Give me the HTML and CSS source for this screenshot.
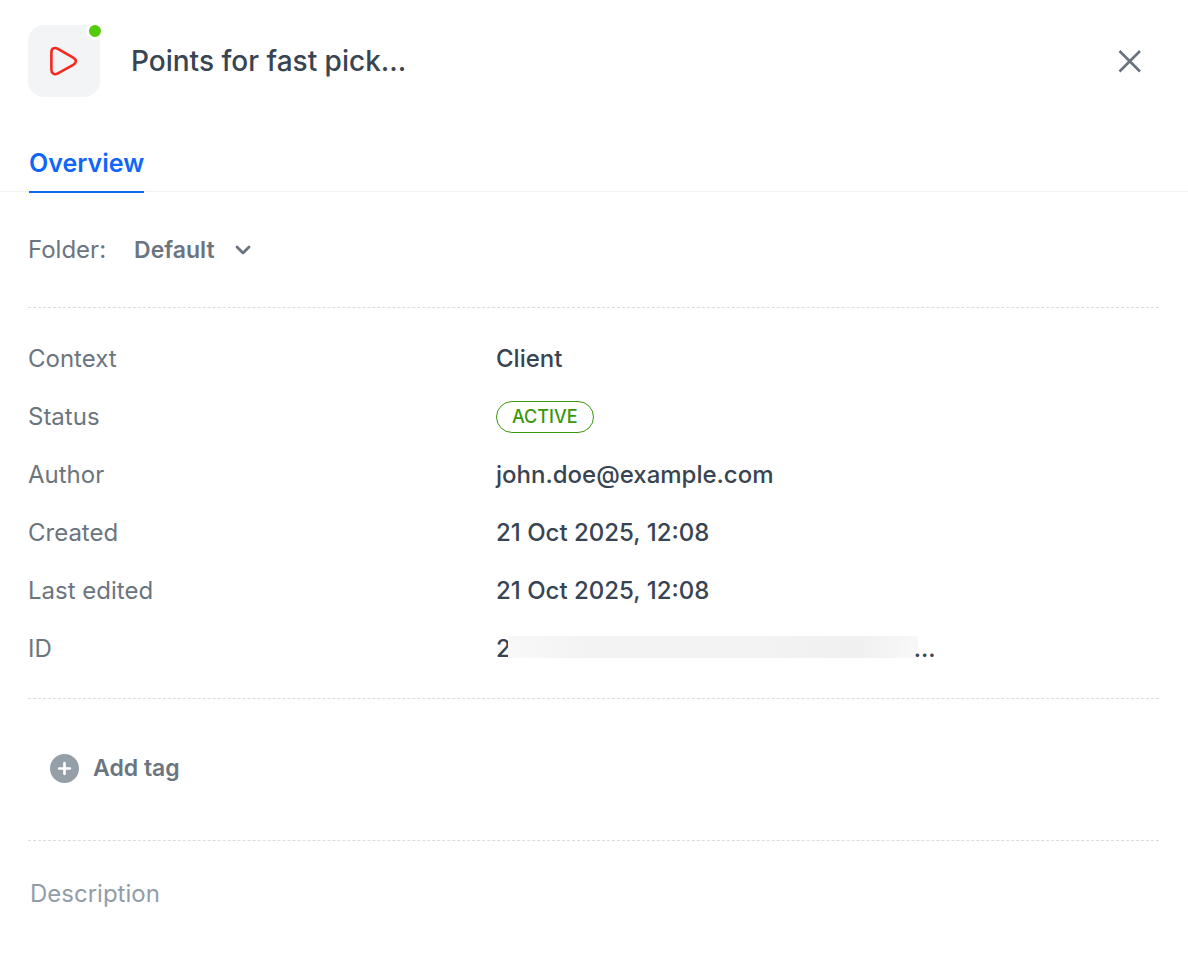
FILE: index.html
```html
<!DOCTYPE html>
<html lang="en">

<head>
    <meta charset="UTF-8">
    <meta name="viewport" content="width=device-width, initial-scale=1.0">
    <title>Points for fast pick...</title>

    <link rel="stylesheet" href="styles.css">
</head>

<body>
    <header class="header">
        <div class="logo">
            <svg width="32" height="32" viewBox="0 0 32 32" fill="none" stroke="#f5291f" stroke-width="2.6" stroke-linejoin="round">
                <path d="M3.4 7.5C3.4 3.4 6.4 1.9 9.9 3.8L25.2 12.6C28.7 14.7 28.7 17.7 25.2 19.8L9.9 28.4C6.4 30.3 3.4 28.6 3.4 24.7Z" />
            </svg>
            <span class="dot"></span>
        </div>
        <h1 class="title">Points for fast pick...</h1>
        <button class="close" type="button" aria-label="Close">
            <svg width="24" height="24" viewBox="0 0 24 24" fill="none" stroke="#69727f" stroke-width="2.6">
                <path d="M1.5 2L22 22.5M22 2L1.5 22.5" />
            </svg>
        </button>
    </header>

    <nav class="tabs">
        <a href="#overview" class="tab">Overview</a>
    </nav>

    <main class="content" id="overview">
        <div class="folder section">
            <label for="folder">Folder:</label>
            <div class="picker">
                <select id="folder" class="folder-select">
                    <option>Default</option>
                </select>
                <svg class="chevron" width="16" height="10" viewBox="0 0 16 10" fill="none" stroke="#69737f" stroke-width="2.8" stroke-linecap="round" stroke-linejoin="round">
                    <path d="M2 2L8 8L14 2" />
                </svg>
            </div>
        </div>

        <dl class="details section">
            <dt>Context</dt>
            <dd>Client</dd>
            <dt>Status</dt>
            <dd><span class="badge">ACTIVE</span></dd>
            <dt>Author</dt>
            <dd>john.doe@example.com</dd>
            <dt>Created</dt>
            <dd>21 Oct 2025, 12:08</dd>
            <dt>Last edited</dt>
            <dd>21 Oct 2025, 12:08</dd>
            <dt>ID</dt>
            <dd><span>2</span><span class="id-hidden"></span><span>...</span></dd>
        </dl>

        <div class="tags section">
            <button class="add-tag" type="button">
                <svg width="29" height="29" viewBox="0 0 30 30">
                    <circle cx="15" cy="15" r="15" fill="#949fa8" />
                    <path d="M15 9.5V20.5M9.5 15H20.5" stroke="#fff" stroke-width="2.8" stroke-linecap="round" />
                </svg>
                Add tag
            </button>
        </div>

        <textarea class="description" rows="1" placeholder="Description" aria-label="Description"></textarea>
    </main>
</body>

</html>
```
FILE: styles.css
```css
* {
    box-sizing: border-box;
    margin: 0;
    padding: 0;
}

body {
    font-family: Inter, "Liberation Sans", sans-serif;
    font-size: 24px;
    line-height: 32px;
    color: #6b7580;
    background-color: #fff;
}

button,
select,
textarea {
    font: inherit;
    color: inherit;
    border: none;
    background: none;
}

.header {
    display: flex;
    align-items: center;
    gap: 31px;
    padding: 25px 46px 0 28px;
}

.logo {
    position: relative;
    display: flex;
    align-items: center;
    justify-content: center;
    width: 72px;
    height: 72px;
    border-radius: 16px;
    background-color: #f3f4f6;
}

/* status dot over the logo corner */
.dot {
    position: absolute;
    top: -3px;
    right: -4px;
    width: 18px;
    height: 18px;
    border: 3px solid #fff;
    border-radius: 50%;
    background-color: #54cb0c;
}

.title {
    flex: 1;
    font-size: 28px;
    font-weight: 500;
    color: #384452;
}

.close {
    display: flex;
    cursor: pointer;
}

.tabs {
    display: flex;
    margin-top: 50px;
    padding: 0 29px;
    border-bottom: 1px solid #f1f2f3;
}

.tab {
    margin-bottom: -2px;
    padding-bottom: 12px;
    border-bottom: 2px solid #0f67f8;
    font-size: 25px;
    font-weight: 600;
    color: #0f67f8;
    text-decoration: none;
}

.content {
    padding: 0 29px 0 28px;
}

.section {
    border-bottom: 1px dashed #d9dddf;
}

.folder {
    display: flex;
    align-items: center;
    gap: 28px;
    padding: 42px 0 41px;
}

.picker {
    display: flex;
    align-items: center;
    font-size: 23px;
    font-weight: 600;
}

.folder-select {
    appearance: none;
    padding-right: 36px;
    cursor: pointer;
}

.chevron {
    margin-left: -16px;
    pointer-events: none;
}

.details {
    display: grid;
    grid-template-columns: 468fr 663fr;
    row-gap: 26px;
    padding: 35px 0 33px;
}

.details dd {
    display: flex;
    align-items: center;
    font-weight: 500;
    color: #384452;
}

.badge {
    padding: 0 15px;
    border: 1px solid #3b960b;
    border-radius: 16px;
    font-size: 18px;
    line-height: 30px;
    color: #3b960b;
}

.id-hidden {
    width: 410px;
    height: 22px;
    margin: 0 -4px 4px -3px;
    background: linear-gradient(90deg, #f8f8f8, #f3f3f3 20%, #f3f3f3 60%, #f0f0f0 85%, #f8f8f8);
}

.tags {
    padding: 53px 22px 56px;
}

.add-tag {
    display: flex;
    align-items: center;
    gap: 14px;
    font-size: 23px;
    font-weight: 600;
    cursor: pointer;
}

.description {
    display: block;
    width: 100%;
    margin-top: 37px;
    padding: 0 2px;
    resize: none;
    outline: none;
}

.description::placeholder {
    color: #929da7;
}
```
